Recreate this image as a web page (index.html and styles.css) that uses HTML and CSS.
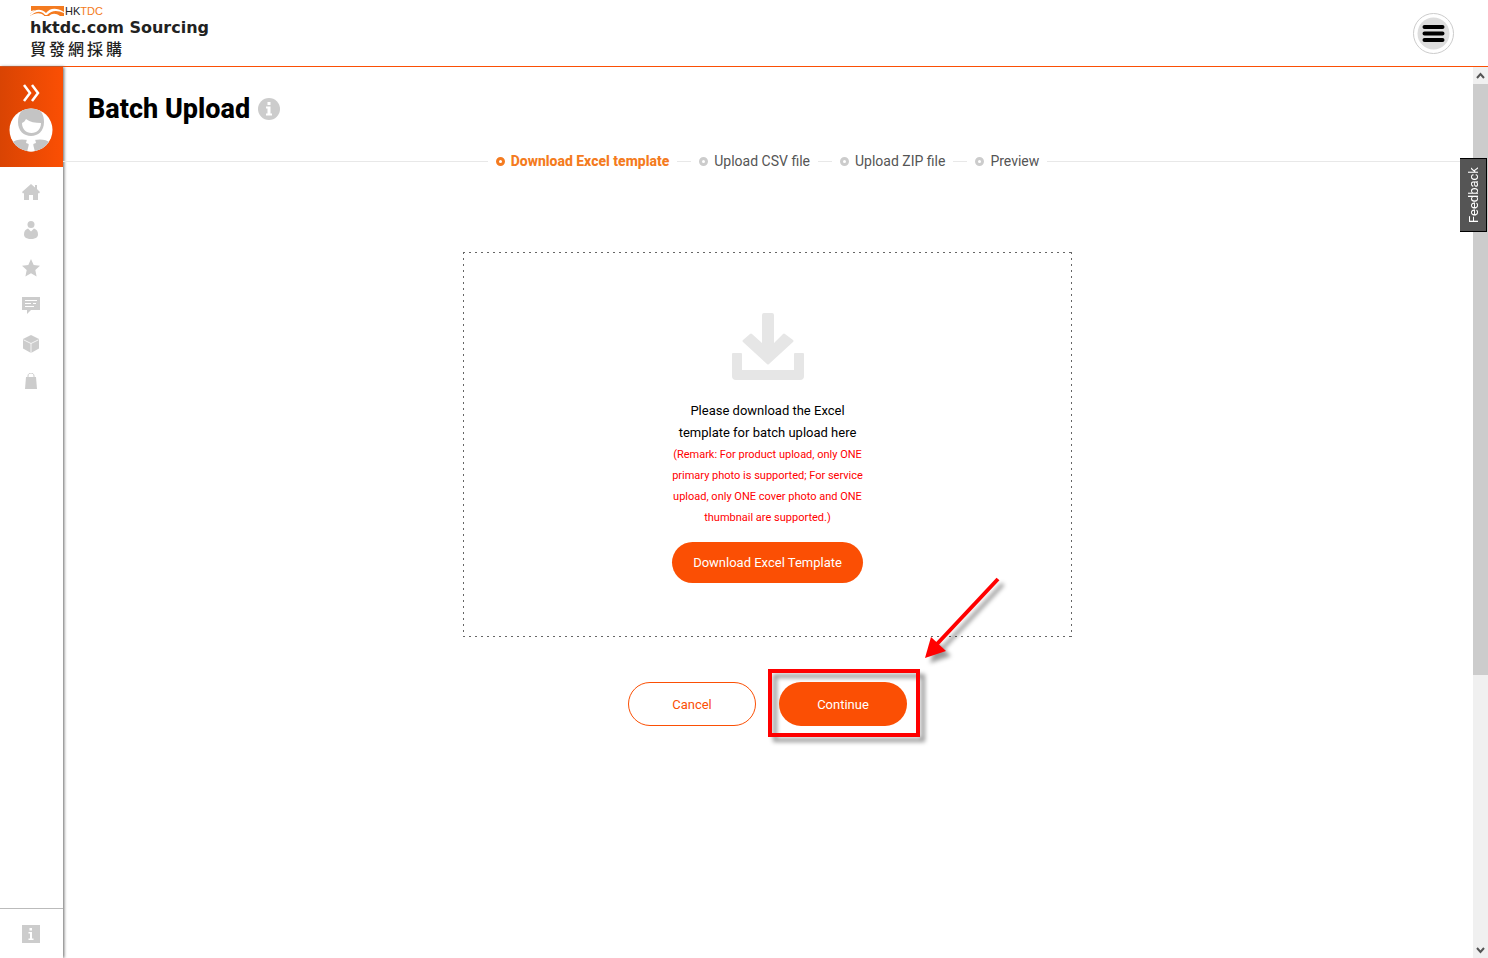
FILE: index.html
```
<!DOCTYPE html>
<html lang="en">
<head>
    <meta charset="UTF-8">
    <meta name="viewport" content="width=device-width, initial-scale=1.0">
    <title>Batch Upload</title>
    <link rel="stylesheet" href="styles.css">
</head>
<body>
    <header class="header">
        <a class="logo" href="#">
            <span class="logo-brand">
                <svg class="logo-mark" width="34" height="10" viewBox="0 0 34 10">
                    <path fill="#f47b20" d="M1 0h33v10H0V8l5-4-4 1z"/>
                    <path fill="#fff" d="M0 8C5 3 11 2 16 7c4-5 10-6 18-1v1C27 4 22 4 17 9h-2C11 4 6 5 0 10z"/>
                    <path fill="#fff" d="M0 10c5-3 10-4 14-.5V10zM19 10c3-3 7-3 11 0z"/>
                </svg>
                <span class="logo-name">HK<b>TDC</b></span>
            </span>
            <span class="logo-title">hktdc.com Sourcing</span>
            <span class="logo-cn" lang="zh-Hant">貿發網採購</span>
        </a>
        <button class="menu-btn" type="button" aria-label="Menu">
            <svg width="33" height="33" viewBox="0 0 33 33">
                <circle cx="16.500" cy="16.500" r="16" fill="#ddd"/>
                <path d="M7.500 10h18M7.500 16.500h18M7.500 23h18" stroke="#000" stroke-width="4" stroke-linecap="round"/>
            </svg>
        </button>
    </header>

    <div class="page">
        <nav class="sidebar">
            <div class="profile">
                <button class="expand" type="button" aria-label="Expand menu">
                    <svg width="18" height="18" viewBox="0 0 18 18" fill="none" stroke="#fff" stroke-width="2.500">
                        <path d="M2 1l6 8-6 8M10 1l6 8-6 8"/>
                    </svg>
                </button>
                <a href="#" aria-label="My profile">
                    <svg class="avatar" width="44" height="44" viewBox="0 0 44 44">
                        <defs><clipPath id="face"><circle cx="22" cy="22" r="21.500"/></clipPath></defs>
                        <g clip-path="url(#face)">
                            <rect width="44" height="44" fill="#fff"/>
                            <path fill="#c4c4c4" d="M9 14C9 5 14-1 22-1s13 6 13 15-6 14-13 14S9 23 9 14z"/>
                            <path fill="#fff" d="M13 15c2-1 3-2 4-4 4 3 9 4 15 4 0 6-4 10-9.500 10S13 21 13 15z"/>
                            <path fill="#c4c4c4" d="M2 35c5-4 11-4 17-3l2 12H2zM42 35c-5-4-11-4-17-3l-2 12h19z"/>
                            <path fill="#fff" d="M18 31l4 1 4-1 1 4-3 1 2 8h-8l2-8-3-1z"/>
                        </g>
                    </svg>
                </a>
            </div>
            <div class="links">
                <a href="#" aria-label="Home">
                    <svg width="18" height="18" viewBox="0 0 18 18"><path d="M9 1l4 3.500V2h2v4l3 3-1 1.500-1-.5v7h-5v-5H7v5H2v-7l-1 .5L0 9z"/></svg>
                </a>
                <a href="#" aria-label="Account">
                    <svg width="18" height="18" viewBox="0 0 18 18"><circle cx="9" cy="3.500" r="3.500"/><path d="M6 7.500l3 3 3-3c3 1 4 3 4 6 0 3-3 4.500-7 4.500s-7-1.500-7-4.500c0-3 1-5 4-6z"/></svg>
                </a>
                <a href="#" aria-label="Favourites">
                    <svg width="18" height="18" viewBox="0 0 18 18"><path d="M9 0l2.700 6 6.300.7-4.700 4.300 1.300 6.500L9 14.200l-5.600 3.300L4.700 11 0 6.700 6.300 6z"/></svg>
                </a>
                <a href="#" aria-label="Messages">
                    <svg width="18" height="18" viewBox="0 0 18 18"><path d="M0 0h18v13H9l-4 4v-4H0z"/><path d="M3 3.500h12M3 6.500h6M11 6.500h3M3 9.500h9" stroke="#fff" stroke-width="1.200"/></svg>
                </a>
                <a href="#" aria-label="Products">
                    <svg width="18" height="18" viewBox="0 0 18 18"><path d="M9 0l8 4v9.500L9 18l-8-4.500V4z"/><path d="M1.500 4.800L9 8.500l7.500-3.700M9 8.500V18" fill="none" stroke="#fff" stroke-width=".8"/></svg>
                </a>
                <a href="#" aria-label="Orders">
                    <svg width="18" height="18" viewBox="0 0 18 18"><path d="M4 4h10l1 12H3z"/><path d="M6 5V3c0-4 6-4 6 0v2" fill="none" stroke="#ccc"/></svg>
                </a>
            </div>
            <a class="help" href="#" aria-label="Help">
                <svg width="18" height="18" viewBox="0 0 18 18"><path d="M0 0h18v18H0z"/><path fill="#fff" d="M7.500 3H10v2.500H7.500zM6.500 7H10v6.500h1.500V15h-5v-1.500H8v-5H6.500z"/></svg>
            </a>
        </nav>

        <main class="content">
            <div class="heading">
                <h1>Batch Upload</h1>
                <svg width="22" height="22" viewBox="0 0 22 22">
                    <circle cx="11" cy="11" r="11" fill="#ccc"/>
                    <path fill="#fff" d="M9.500 4h3v3h-3zM8 8.500h4.500v7H14v2H8v-2h1.500v-5H8z"/>
                </svg>
            </div>

            <ol class="steps">
                <li class="step active">Download Excel template</li>
                <li class="step">Upload CSV file</li>
                <li class="step">Upload ZIP file</li>
                <li class="step">Preview</li>
            </ol>

            <section class="box">
                <svg width="72" height="68" viewBox="0 0 72 68" fill="#e6e6e6">
                    <path d="M32 0h8q2 0 2 2v28l9-9q1-1 2 0l8 6q1 1 0 2L37 51q-1 1-2 0L11 29q-1-1 0-2l7-6q1-1 2 0l10 9V2q0-2 2-2z"/>
                    <path d="M1 40h8q1 0 1 1v16h52V41q0-1 1-1h8q1 0 1 1v22q0 4-4 4H4q-4 0-4-4V41q0-1 1-1z"/>
                </svg>
                <p class="note">Please download the Excel<br>template for batch upload here</p>
                <p class="remark">(Remark: For product upload, only ONE<br>primary photo is supported; For service<br>upload, only ONE cover photo and ONE<br>thumbnail are supported.)</p>
                <button class="btn btn-download" type="button">Download Excel Template</button>
            </section>

            <div class="actions">
                <button class="btn btn-cancel" type="button">Cancel</button>
                <div class="highlight">
                    <button class="btn" type="button">Continue</button>
                    <svg class="arrow" width="96" height="96" viewBox="0 0 96 96">
                        <path d="M78 5L17 70" stroke="#f00" stroke-width="4"/>
                        <path d="M5 84l6-21 15 14z" fill="#f00"/>
                    </svg>
                </div>
            </div>
        </main>

        <div class="scroll">
            <svg width="15" height="17" viewBox="0 0 15 17"><path d="M4 11l3.500-4 3.500 4"/></svg>
            <div class="track"><div class="thumb"></div></div>
            <svg width="15" height="17" viewBox="0 0 15 17"><path d="M4 7l3.500 4L11 7"/></svg>
        </div>
    </div>

    <button class="feedback" type="button">Feedback</button>
</body>
</html>
```

FILE: styles.css
```
*,
*::before,
*::after {
    box-sizing: border-box;
}
body {
    margin: 0;
    height: 100vh;
    display: flex;
    flex-direction: column;
    font-family: Roboto, sans-serif;
    font-size: 13px;
    color: #000;
    background: #fff;
}
h1, p, ol {
    margin: 0;
    padding: 0;
}
button {
    padding: 0;
    border: 0;
    background: none;
    font: inherit;
    cursor: pointer;
}
a {
    text-decoration: none;
}
svg {
    display: block;
}

/* header */
.header {
    display: flex;
    justify-content: space-between;
    align-items: center;
    height: 67px;
    padding: 0 34px 0 30px;
    border-bottom: 1px solid #fb4f04;
}
.logo {
    display: flex;
    flex-direction: column;
    margin-bottom: 2px;
    color: #222;
}
.logo-brand {
    display: flex;
    align-items: center;
    gap: 1px;
    height: 13px;
}
.logo-name {
    font: 11px/13px "Liberation Sans", sans-serif;
}
.logo-name b {
    font-weight: normal;
    color: #f47b20;
}
.logo-title {
    font: bold 16px/19px "DejaVu Sans", sans-serif;
}
.logo-cn {
    font: 500 16px/23px "Noto Sans CJK TC", sans-serif;
    letter-spacing: 3px;
}
.menu-btn {
    display: flex;
    align-items: center;
    justify-content: center;
    width: 41px;
    height: 41px;
    border: 1px solid #ccc;
    border-radius: 50%;
}

/* sidebar */
.page {
    flex: 1;
    display: flex;
    min-height: 0;
}
.sidebar {
    display: flex;
    flex-direction: column;
    width: 63px;
    box-shadow: 1px 0 3px #666;
}
.profile {
    display: flex;
    flex-direction: column;
    align-items: center;
    gap: 6px;
    height: 100px;
    padding: 17px 1px 0 0;
    background: linear-gradient(90deg, #d94403, #fb4f04);
}
.links {
    flex: 1;
    display: flex;
    flex-direction: column;
    align-items: center;
    gap: 20px;
    padding: 16px 1px 0 0;
}
.links svg,
.help svg {
    fill: #ccc;
}
.help {
    display: flex;
    justify-content: center;
    height: 50px;
    padding: 16px 1px 0 0;
    border-top: 1px solid #bbb;
}

/* content */
.content {
    flex: 1;
    display: flex;
    flex-direction: column;
    align-items: center;
    padding-right: 1px;
}
.heading {
    display: flex;
    align-items: center;
    align-self: flex-start;
    gap: 8px;
    padding: 25px 25px 0;
}
h1 {
    font-size: 27px;
    line-height: 34px;
    font-weight: 800;
}
.steps {
    display: flex;
    align-items: center;
    align-self: stretch;
    gap: 8px;
    margin-top: 25px;
    list-style: none;
    font-size: 14px;
    line-height: 20px;
    color: #555;
}
.steps::before,
.steps::after {
    content: "";
    flex: 1;
    height: 1px;
    background: #e8e8e8;
}
.step {
    display: flex;
    align-items: center;
}
.step::before {
    content: "";
    width: 9px;
    height: 9px;
    margin-right: 6px;
    border: 3px solid #ccc;
    border-radius: 50%;
}
.step:not(:last-child)::after {
    content: "";
    width: 14px;
    height: 1px;
    margin-left: 8px;
    background: #e8e8e8;
}
.step.active {
    font-weight: 800;
    color: #f47b20;
}
.step.active::before {
    border-color: #f47b20;
}
.box {
    display: flex;
    flex-direction: column;
    align-items: center;
    width: 609px;
    max-width: 100%;
    margin-top: 81px;
    padding: 61px 20px 54px;
    /* sparse dashes: 2px on, 4px off */
    background:
        repeating-linear-gradient(90deg, #666 0 2px, transparent 2px 6px) top / 100% 1px no-repeat,
        repeating-linear-gradient(90deg, #666 0 2px, transparent 2px 6px) bottom / 100% 1px no-repeat,
        repeating-linear-gradient(#666 0 2px, transparent 2px 6px) left / 1px 100% no-repeat,
        repeating-linear-gradient(#666 0 2px, transparent 2px 6px) right / 1px 100% no-repeat;
    text-align: center;
}
.note {
    margin-top: 19px;
    line-height: 22px;
}
.remark {
    font-size: 11px;
    line-height: 21px;
    color: #f00;
}
.btn {
    width: 128px;
    height: 44px;
    border-radius: 22px;
    background: #fb4f04;
    color: #fff;
}
.btn-download {
    width: 191px;
    height: 41px;
    margin-top: 14px;
}
.btn-cancel {
    border: 1px solid #fb4f04;
    background: #fff;
    color: #fb4f04;
}
.actions {
    display: flex;
    gap: 23px;
    margin-top: 45px;
}

/* red marker around the button */
.highlight {
    position: relative;
}
.highlight::before {
    content: "";
    position: absolute;
    inset: -13px -13px -11px -11px;
    border: 4px solid #f00;
    filter: drop-shadow(5px 5px 2px rgba(0, 0, 0, 0.4));
    pointer-events: none;
}
.highlight .btn {
    position: relative;
}
.arrow {
    position: absolute;
    left: 141px;
    top: -108px;
    filter: drop-shadow(5px 5px 2px rgba(0, 0, 0, 0.4));
    pointer-events: none;
}

/* scroll bar */
.scroll {
    display: flex;
    flex-direction: column;
    width: 15px;
    background: #f0f0f0;
}
.scroll path {
    fill: none;
    stroke: #555;
    stroke-width: 2;
}
.track {
    flex: 1;
}
.thumb {
    height: 69%;
    background: #ccc;
}
.feedback {
    position: absolute;
    top: 158px;
    right: 1px;
    width: 27px;
    height: 74px;
    border: 1px solid #000;
    border-right: 0;
    background: #555;
    color: #fff;
    writing-mode: vertical-rl;
    transform: rotate(180deg);
}
```
